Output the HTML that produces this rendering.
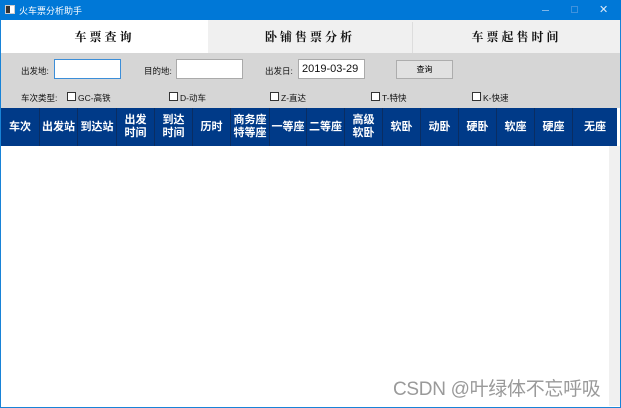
<!DOCTYPE html>
<html><head><meta charset="utf-8"><style>
*{margin:0;padding:0;box-sizing:border-box}
body{width:621px;height:408px;overflow:hidden;background:#fff;font-family:"Liberation Sans","Noto Sans CJK SC",sans-serif;position:relative}
.abs{position:absolute}
.title{left:0;top:0;width:621px;height:20px;background:#0078d7;color:#fff;font-size:9px}
.frame{left:0;top:20px;width:621px;height:388px;border:1px solid #1883d7;border-top:none}
.tab{top:20px;height:33px;font-family:"Noto Serif CJK SC",serif;font-weight:bold;font-size:12px;letter-spacing:3px;display:flex;align-items:center;justify-content:center;color:#111}
.panel{left:1px;top:53px;width:619px;height:55px;background:#d6d6d6}
.lbl{font-size:8.5px;color:#111}
.inp{background:#fff;border:1px solid #aaa;height:20px}
.cb{width:9px;height:9px;border:1px solid #333;background:#fff}
.hdr{left:1px;top:108px;width:616px;height:38px;background:#003a88;display:flex}
.hdr div{color:#fff;font-size:11px;font-weight:bold;display:flex;align-items:center;justify-content:center;text-align:center;line-height:13px;border-right:1px solid #0a2d62}
</style></head><body>
<div class="abs title"><div class="abs" style="left:5px;top:5px;width:10px;height:9px;background:#fff;border:1px solid #ccc"></div><div class="abs" style="left:6px;top:6px;width:4px;height:7px;background:#333"></div><span class="abs" style="left:19px;top:4px">火车票分析助手</span>
<div class="abs" style="left:542px;top:10px;width:7px;height:1px;background:#7fb6e8"></div><div class="abs" style="left:571px;top:6px;width:7px;height:7px;border:1px solid #3f92dd"></div><span class="abs" style="left:599px;top:3px;font-size:11px;color:#dbeaf8">✕</span></div>
<div class="abs frame"></div>
<div class="abs" style="left:208px;top:20px;width:412px;height:33px;background:#f0f0f0"></div>
<div class="abs" style="left:412px;top:22px;width:1px;height:31px;background:#ddd"></div>
<div class="abs tab" style="left:1px;width:207px">车票查询</div>
<div class="abs tab" style="left:208px;width:204px">卧铺售票分析</div>
<div class="abs tab" style="left:413px;width:207px">车票起售时间</div>
<div class="abs panel"></div>
<span class="abs lbl" style="left:21px;top:65px">出发地:</span>
<div class="abs inp" style="left:54px;top:59px;width:67px;border-color:#3c8ed8"></div>
<span class="abs lbl" style="left:144px;top:65px">目的地:</span>
<div class="abs inp" style="left:176px;top:59px;width:67px"></div>
<span class="abs lbl" style="left:265px;top:65px">出发日:</span>
<div class="abs inp" style="left:298px;top:59px;width:67px;font-size:11px;padding:3px 0 0 3px;color:#111">2019-03-29</div>
<div class="abs" style="left:396px;top:60px;width:57px;height:19px;background:#e1e1e1;border:1px solid #adadad;font-size:8px;text-align:center;line-height:17px">查询</div>
<span class="abs lbl" style="left:21px;top:92px">车次类型:</span>
<div class="abs cb" style="left:67px;top:92px"></div><span class="abs lbl" style="left:78px;top:92px">GC-高铁</span>
<div class="abs cb" style="left:169px;top:92px"></div><span class="abs lbl" style="left:180px;top:92px">D-动车</span>
<div class="abs cb" style="left:270px;top:92px"></div><span class="abs lbl" style="left:281px;top:92px">Z-直达</span>
<div class="abs cb" style="left:371px;top:92px"></div><span class="abs lbl" style="left:382px;top:92px">T-特快</span>
<div class="abs cb" style="left:472px;top:92px"></div><span class="abs lbl" style="left:483px;top:92px">K-快速</span>
<div class="abs hdr">
<div style="width:39px">车次</div><div style="width:38px">出发站</div><div style="width:39px">到达站</div><div style="width:38px">出发<br>时间</div><div style="width:38px">到达<br>时间</div><div style="width:38px">历时</div><div style="width:39px">商务座<br>特等座</div><div style="width:37px">一等座</div><div style="width:38px">二等座</div><div style="width:38px">高级<br>软卧</div><div style="width:38px">软卧</div><div style="width:38px">动卧</div><div style="width:38px">硬卧</div><div style="width:38px">软座</div><div style="width:38px">硬座</div><div style="width:44px;border:none">无座</div>
</div>
<div class="abs" style="left:609px;top:146px;width:11px;height:260px;background:#f0f0f0"></div>
<span class="abs" style="left:393px;top:374px;font-size:19px;letter-spacing:-0.3px;color:#9a9a9a;white-space:nowrap">CSDN @叶绿体不忘呼吸</span>
</body></html>
